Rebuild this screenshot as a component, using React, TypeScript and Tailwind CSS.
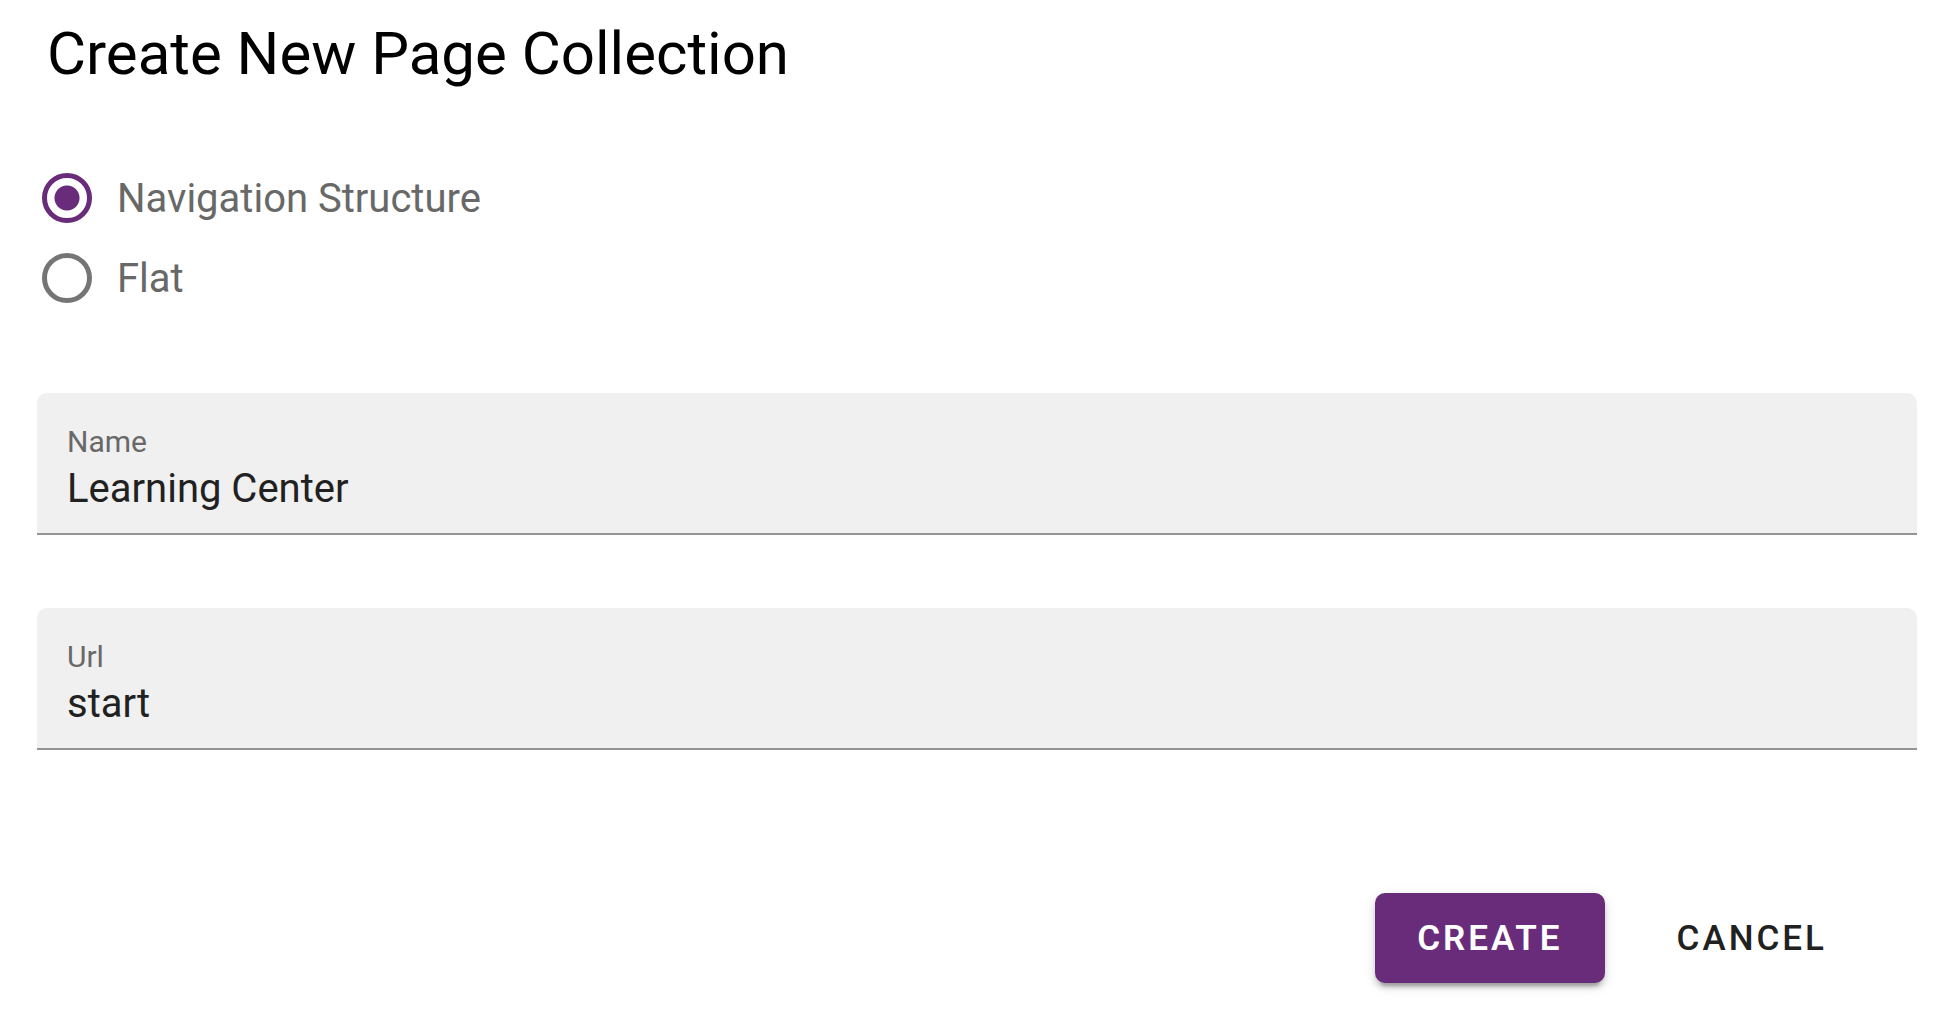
import { useState } from "react";

const options = ["Navigation Structure", "Flat"];

function Radio({ label, checked, onChange }: { label: string; checked: boolean; onChange: () => void }) {
  return (
    <label className="flex h-20 cursor-pointer items-center gap-[25px] text-[40px] leading-[48px] text-[#686868]">
      <input
        type="radio"
        name="structure"
        checked={checked}
        onChange={onChange}
        className="m-0 size-[50px] shrink-0 appearance-none rounded-full border-[5px] border-[#757575] checked:border-[#692c7b] checked:bg-[radial-gradient(circle,#692c7b_12px,transparent_13px)]"
      />
      <span className="pt-0.5">{label}</span>
    </label>
  );
}

function Field({ id, label, initial }: { id: string; label: string; initial: string }) {
  const [value, setValue] = useState(initial);
  return (
    <div className="flex h-[142px] flex-col rounded-t-[10px] border-b-2 border-[#949494] bg-[#f0f0f0] px-[30px] pt-[31px]">
      <label htmlFor={id} className="text-[30px] leading-[36px] text-[#686868]">
        {label}
      </label>
      <input
        id={id}
        value={value}
        onChange={(e) => setValue(e.target.value)}
        className="h-[58px] w-full bg-transparent text-[40px] text-[#212121] outline-none"
      />
    </div>
  );
}

export default function App() {
  const [selected, setSelected] = useState(options[0]);
  return (
    <form
      className="bg-white pt-5 pr-8 pb-7 pl-[37px] font-[Roboto,sans-serif]"
      onSubmit={(e) => e.preventDefault()}
    >
      <h1 className="pl-[10px] text-[60px] leading-[68px] text-black">Create New Page Collection</h1>
      <div role="radiogroup" aria-label="Collection type" className="mt-[70px] pl-[5px]">
        {options.map((o) => (
          <Radio key={o} label={o} checked={o === selected} onChange={() => setSelected(o)} />
        ))}
      </div>
      <div className="mt-[75px] flex flex-col gap-[73px]">
        <Field id="name" label="Name" initial="Learning Center" />
        <Field id="url" label="Url" initial="start" />
      </div>
      <div className="mt-[143px] flex justify-end gap-[30px] pr-12">
        <button
          type="submit"
          className="h-[90px] rounded-[10px] bg-[#692c7b] px-[42px] pt-0.5 text-[35px] font-semibold tracking-[3px] text-white shadow-[0_8px_3px_-5px_rgba(0,0,0,0.2),0_5px_5px_0_rgba(0,0,0,0.14),0_3px_13px_0_rgba(0,0,0,0.12)]"
        >
          CREATE
        </button>
        <button
          type="button"
          className="h-[90px] px-[42px] pt-0.5 text-[35px] font-medium tracking-[3px] text-[#212121]"
        >
          CANCEL
        </button>
      </div>
    </form>
  );
}
